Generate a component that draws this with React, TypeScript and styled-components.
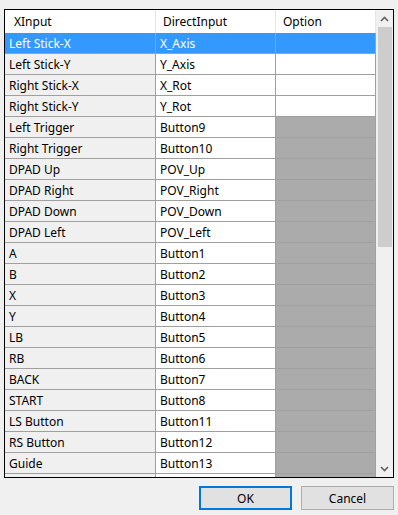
import React from "react";
import styled, { createGlobalStyle } from "styled-components";

const Global = createGlobalStyle`
  html, body { margin: 0; padding: 0; background: #f0f0f0; }
  body { font-family: "Noto Sans", "Open Sans", sans-serif; font-size: 12px; color: #000; }
`;

const Page = styled.div`
  width: 398px;
  height: 515px;
  padding: 9px 0 0 4px;
  box-sizing: border-box;
  display: flex;
  flex-direction: column;
`;

const Frame = styled.div`
  width: 390px;
  height: 469px;
  box-sizing: border-box;
  border: 1px solid #000;
  display: flex;
  background: #f0f0f0;
`;

const Grid = styled.div`
  width: 371px;
  height: 467px;
  overflow: hidden;
  display: flex;
  flex-direction: column;
`;

const HeaderRow = styled.div`
  display: grid;
  grid-template-columns: 151px 120px 100px;
  height: 23px;
  flex: none;
  background: #fff;
`;

const HeaderCell = styled.div`
  box-sizing: border-box;
  border-right: 1px solid #e5e5e5;
  padding-left: ${(p: { $pad: number }) => p.$pad}px;
  display: flex;
  align-items: center;
  line-height: 1;
`;

const Row = styled.div<{ $selected?: boolean }>`
  display: grid;
  grid-template-columns: 151px 120px 100px;
  height: 21px;
  flex: none;
  color: ${(p) => (p.$selected ? "#fff" : "#000")};
`;

type CellKind = "label" | "value" | "option" | "disabled";

const Cell = styled.div<{ $kind: CellKind; $selected?: boolean }>`
  box-sizing: border-box;
  border-right: 1px solid #a0a0a0;
  border-bottom: 1px solid #a0a0a0;
  padding-left: 4px;
  display: flex;
  align-items: center;
  white-space: nowrap;
  overflow: hidden;
  background: ${(p) =>
    p.$selected
      ? "#3399ff"
      : p.$kind === "label"
      ? "#f0f0f0"
      : p.$kind === "disabled"
      ? "#ababab"
      : "#fff"};
`;

const ScrollBar = styled.div`
  width: 17px;
  height: 467px;
  display: flex;
  flex-direction: column;
  background: #f0f0f0;
`;

const ArrowBtn = styled.div`
  height: 17px;
  flex: none;
  display: flex;
  align-items: center;
  justify-content: center;
`;

const Track = styled.div`
  flex: 1;
  padding: 0 1px 0 2px;
  display: flex;
  flex-direction: column;
`;

const Thumb = styled.div`
  height: 220px;
  background: #cdcdcd;
`;

const Buttons = styled.div`
  width: 390px;
  margin-top: 8px;
  display: flex;
  justify-content: flex-end;
  gap: 9px;
`;

const Button = styled.button<{ $default?: boolean }>`
  width: 93px;
  height: 24px;
  box-sizing: border-box;
  background: #e1e1e1;
  border: ${(p) => (p.$default ? "2px solid #0078d7" : "1px solid #adadad")};
  font-family: inherit;
  font-size: 12px;
  color: #000;
  padding: 0;
  margin: 0;
`;

const Chevron = ({ up }: { up: boolean }) => (
  <svg width="9" height="6" viewBox="0 0 9 6">
    <path
      d={up ? "M1 5 L4.5 1.5 L8 5" : "M1 1 L4.5 4.5 L8 1"}
      fill="none"
      stroke="#606060"
      strokeWidth="1.6"
    />
  </svg>
);

const rows: [string, string, boolean][] = [
  ["Left Stick-X", "X_Axis", true],
  ["Left Stick-Y", "Y_Axis", true],
  ["Right Stick-X", "X_Rot", true],
  ["Right Stick-Y", "Y_Rot", true],
  ["Left Trigger", "Button9", false],
  ["Right Trigger", "Button10", false],
  ["DPAD Up", "POV_Up", false],
  ["DPAD Right", "POV_Right", false],
  ["DPAD Down", "POV_Down", false],
  ["DPAD Left", "POV_Left", false],
  ["A", "Button1", false],
  ["B", "Button2", false],
  ["X", "Button3", false],
  ["Y", "Button4", false],
  ["LB", "Button5", false],
  ["RB", "Button6", false],
  ["BACK", "Button7", false],
  ["START", "Button8", false],
  ["LS Button", "Button11", false],
  ["RS Button", "Button12", false],
  ["Guide", "Button13", false],
  ["", "", false],
];

export default function App() {
  return (
    <>
      <Global />
      <Page>
        <Frame>
          <Grid>
            <HeaderRow>
              <HeaderCell $pad={9}>XInput</HeaderCell>
              <HeaderCell $pad={7}>DirectInput</HeaderCell>
              <HeaderCell $pad={7}>Option</HeaderCell>
            </HeaderRow>
            {rows.map(([a, b, en], i) => {
              const sel = i === 0;
              return (
                <Row key={i} $selected={sel}>
                  <Cell $kind="label" $selected={sel}>{a}</Cell>
                  <Cell $kind="value" $selected={sel}>{b}</Cell>
                  <Cell $kind={en ? "option" : "disabled"} $selected={sel} />
                </Row>
              );
            })}
          </Grid>
          <ScrollBar>
            <ArrowBtn>
              <Chevron up />
            </ArrowBtn>
            <Track>
              <Thumb />
            </Track>
            <ArrowBtn>
              <Chevron up={false} />
            </ArrowBtn>
          </ScrollBar>
        </Frame>
        <Buttons>
          <Button $default>OK</Button>
          <Button>Cancel</Button>
        </Buttons>
      </Page>
    </>
  );
}
